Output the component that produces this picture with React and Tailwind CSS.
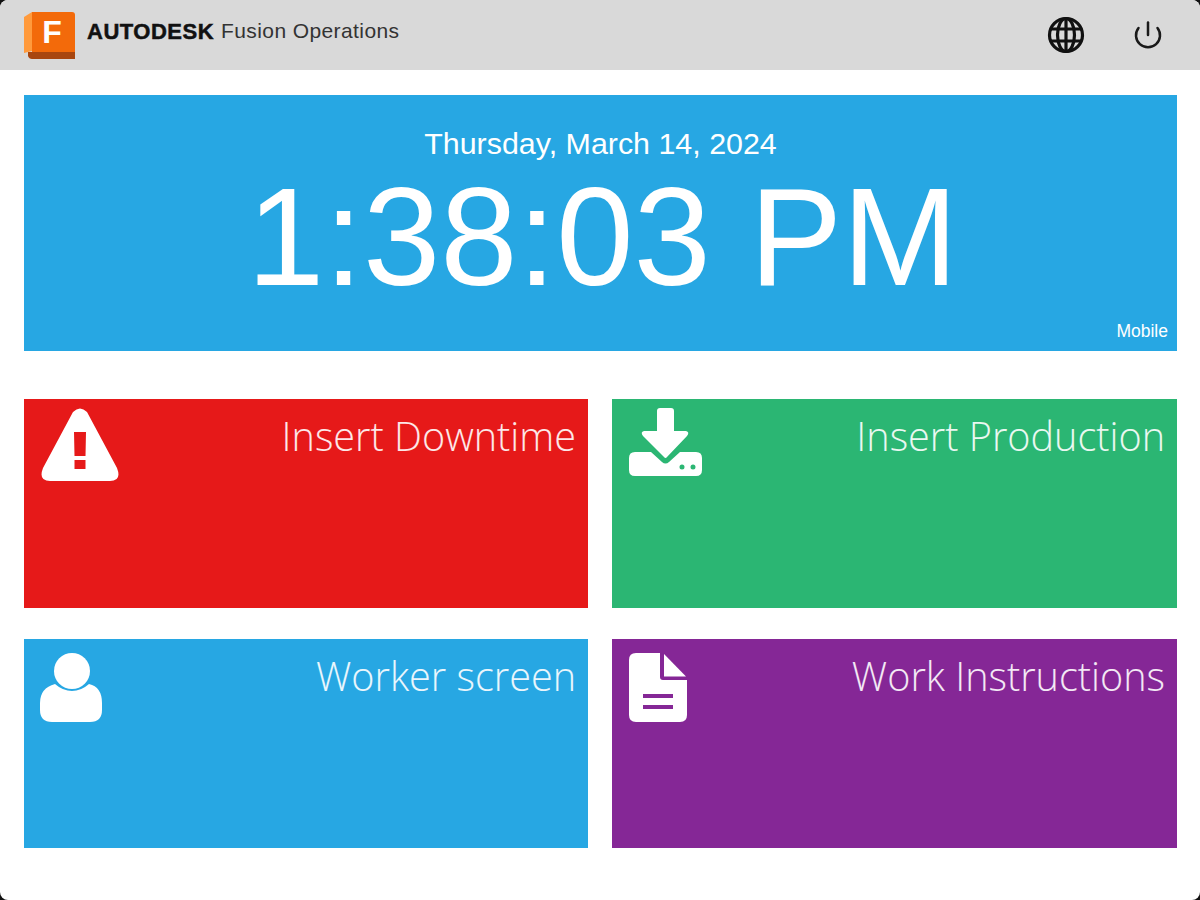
import React from 'react';

const WarningIcon = () => (
  <svg width="80" height="74" viewBox="0 0 80 74" className="block">
    <path
      fillRule="evenodd"
      d="M33 4 Q40 -3 47 4 L77 60 Q82 73 70 73 L10 73 Q-2 73 3 60 Z M34 24 L34.500 48 L45.500 48 L46 24 Z M34.500 52 L34.500 61 L45.500 61 L45.500 52 Z"
      fill="#fff"
    />
  </svg>
);

const DownloadIcon = () => (
  <svg width="73" height="68" viewBox="0 0 73 68" className="block">
    <path d="M28 3 Q28 0 31 0 L42 0 Q45 0 45 3 L45 23 L57 23 Q61 24 58 28 L38 49 Q36.500 51 35 49 L14 28 Q11 24 15 23 L28 23 Z" fill="#fff" />
    <path
      fillRule="evenodd"
      d="M6 44 L22 44 L33 54 Q36.500 57 40 54 L51 44 L67 44 Q73 44 73 50 L73 62 Q73 68 67 68 L6 68 Q0 68 0 62 L0 50 Q0 44 6 44 Z M50.500 59 a2.500 2.500 0 1 0 5 0 a2.500 2.500 0 1 0 -5 0 Z M61.500 59 a2.500 2.500 0 1 0 5 0 a2.500 2.500 0 1 0 -5 0 Z"
      fill="#fff"
    />
  </svg>
);

const UserIcon = () => (
  <svg width="62" height="69" viewBox="0 0 62 69" className="block mt-[5px]">
    <circle cx="32" cy="18" r="18" fill="#fff" />
    <path d="M15 31 Q23 38 32 38 Q41 38 49 31 Q62 34 62 50 L62 57 Q62 69 50 69 L12 69 Q0 69 0 57 L0 50 Q0 35 15 31 Z" fill="#fff" />
  </svg>
);

const DocIcon = () => (
  <svg width="58" height="69" viewBox="0 0 58 69" className="block mt-[5px]">
    <path
      fillRule="evenodd"
      d="M7 0 L31 0 L31 24 Q31 27 34 27 L58 27 L58 62 Q58 69 51 69 L7 69 Q0 69 0 62 L0 7 Q0 0 7 0 Z M14 41 L14 45 L44 45 L44 41 Z M14 52 L14 56 L44 56 L44 52 Z"
      fill="#fff"
    />
    <path d="M35 1 L57 23.500 L35 23.500 Z" fill="#fff" />
  </svg>
);

const GlobeIcon = () => (
  <svg width="38" height="38" viewBox="0 0 38 38" fill="none" stroke="#111" strokeWidth="3.200" className="block">
    <circle cx="19" cy="19" r="16.500" />
    <ellipse cx="19" cy="19" rx="8.500" ry="16.500" />
    <path d="M19 2.500 L19 35.500 M4 13 L34 13 M4 25 L34 25" />
  </svg>
);

const PowerIcon = () => (
  <svg width="30" height="30" viewBox="0 0 30 30" fill="none" stroke="#1a1a1a" strokeWidth="2.500" strokeLinecap="round" className="block">
    <path d="M15 2.500 L15 15" />
    <path d="M5.500 8 A12 12 0 1 0 24.500 8" />
  </svg>
);

const Logo = () => (
  <svg width="51" height="47" viewBox="0 0 51 47" className="block">
    <path d="M0 5 L8 0 L8 39 L0 41 Z" fill="#ff9a3c" />
    <path d="M4 40 L51 40 L51 47 L8 47 Q5 47 4 44 Z" fill="#a8460f" />
    <path d="M8 0 L48 0 Q51 0 51 3 L51 40 L8 40 Z" fill="#f36a0a" />
    <text x="28" y="31" fontFamily="'Liberation Sans', sans-serif" fontWeight="700" fontSize="32" fill="#fff" textAnchor="middle">F</text>
  </svg>
);

const tiles = [
  { title: 'Insert Downtime', color: 'bg-[#e61919] pl-4', icon: <WarningIcon /> },
  { title: 'Insert Production', color: 'bg-[#2bb673] pl-[17px]', icon: <DownloadIcon /> },
  { title: 'Worker screen', color: 'bg-[#27a7e3] pl-4', icon: <UserIcon /> },
  { title: 'Work Instructions', color: 'bg-[#852796] pl-[17px]', icon: <DocIcon /> },
];

const Tile = ({ title, color, icon }) => (
  <div className={`${color} h-[209px] flex justify-between items-start pr-3 pt-[9px]`}>
    {icon}
    <div className="font-['Open_Sans',sans-serif] font-light text-[39.600px] leading-[56px] text-white/90">
      {title}
    </div>
  </div>
);

export default function App() {
  return (
    <div className="bg-[#111] font-['Liberation_Sans',sans-serif]">
      <div className="min-h-screen bg-white rounded-lg overflow-hidden">
        <header className="h-[70px] bg-[#d9d9d9] flex items-center justify-between pl-6 pr-[37px]">
          <div className="flex items-center gap-3">
            <Logo />
            <div className="flex items-center gap-[7px] -mt-2">
              <span className="text-[22px] font-bold text-[#111] tracking-[0.5px] [-webkit-text-stroke:0.5px_#111]">AUTODESK</span>
              <span className="text-[21px] text-[#333] tracking-[0.4px]">Fusion Operations</span>
            </div>
          </div>
          <div className="flex items-center gap-[48px]">
            <GlobeIcon />
            <PowerIcon />
          </div>
        </header>

        <main className="pl-6 pr-[23px] pt-[25px]">
          <section className="relative h-[256px] bg-[#27a7e3] text-white text-center pt-[28px]">
            <div className="text-[30.400px] leading-[40px]">Thursday, March 14, 2024</div>
            <div className="text-[139px] leading-[140px] mt-[4px] pl-1">1:38:03 PM</div>
            <div className="absolute right-[9px] bottom-[10px] text-[17.500px] leading-[20px]">Mobile</div>
          </section>

          <div className="grid grid-cols-[564px_1fr] gap-x-6 gap-y-[31px] mt-[48px]">
            {tiles.map((t) => (
              <Tile key={t.title} {...t} />
            ))}
          </div>
        </main>
      </div>
    </div>
  );
}
